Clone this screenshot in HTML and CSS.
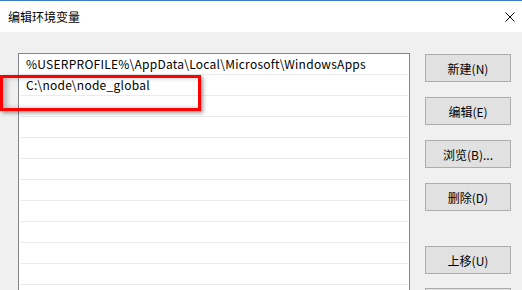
FILE: index.html
```html
<!DOCTYPE html>
<html lang="zh-CN">
<head>
  <meta charset="UTF-8" />
  <title>编辑环境变量</title>
  <link rel="stylesheet" href="styles.css">
</head>
<body>
  <div class="dialog">
    <div class="titlebar">
      <span class="title">编辑环境变量</span>
      <svg class="close" width="10" height="10" viewBox="0 0 10 10">
        <path d="M0.5 0.5 L9.5 9.5 M9.5 0.5 L0.5 9.5" stroke="#000" stroke-width="1" fill="none" />
      </svg>
    </div>

    <div class="content">
      <div class="list">
        <div class="row">%USERPROFILE%\AppData\Local\Microsoft\WindowsApps</div>
        <div class="row">C:\node\node_global</div>
        <div class="row"></div>
        <div class="row"></div>
        <div class="row"></div>
        <div class="row"></div>
        <div class="row"></div>
        <div class="row"></div>
        <div class="row"></div>
        <div class="row"></div>
        <div class="row"></div>
        <div class="row"></div>
      </div>

      <div class="btn-group">
        <button>新建(N)</button>
        <button>编辑(E)</button>
        <button>浏览(B)...</button>
        <button>删除(D)</button>
        <button class="gap">上移(U)</button>
        <button class="next" aria-label="下移(O)"></button>
      </div>

      <div class="highlight"></div>
    </div>
  </div>
</body>
</html>
```

FILE: styles.css
```css
body {
  margin: 0;
  background: #f0f0f0;
  font-family: "Noto Sans CJK SC", "Noto Sans", sans-serif;
  font-size: 12px;
  color: #000;
  overflow: hidden;
}
.dialog {
  height: 290px;
  overflow: hidden;
}
.titlebar {
  height: 32px;
  background: #fff;
  border-top: 1px solid #3b7fc9;
  display: flex;
  align-items: center;
  justify-content: space-between;
  padding: 0 7px 0 8px;
  box-sizing: border-box;
}
.title {
  font-size: 12px;
  margin-top: -1px;
}
.close {
  display: block;
}
.content {
  position: relative;
  display: flex;
  align-items: flex-start;
  padding: 21px 0 0 18px;
}
.list {
  width: 392px;
  height: 300px;
  background: #fff;
  border: 1px solid #82868d;
  border-bottom: none;
  padding: 0 1px;
  box-sizing: border-box;
}
.row {
  height: 20px;
  line-height: 20px;
  border-bottom: 1px solid #ebebeb;
  padding-left: 6px;
  white-space: nowrap;
  letter-spacing: 0.25px;
}
.btn-group {
  display: flex;
  flex-direction: column;
  gap: 15px;
  margin-left: 15px;
  margin-top: 1px;
}
button {
  width: 86px;
  height: 28px;
  padding: 0;
  background: #e1e1e1;
  border: 1px solid #adadad;
  border-radius: 0;
  font-family: "Noto Sans CJK SC", "Noto Sans", sans-serif;
  font-size: 12px;
  color: #000;
}
.gap {
  margin-top: 20px;
}
.next {
  margin-top: -1px;
}
.highlight {
  position: absolute;
  left: 0;
  top: 43px;
  width: 201px;
  height: 36px;
  border: 3px solid #f00;
  box-sizing: border-box;
  box-shadow: 2px 2px 4px rgba(0,0,0,0.4), inset 4px 0 5px rgba(0,0,0,0.25);
}
```
